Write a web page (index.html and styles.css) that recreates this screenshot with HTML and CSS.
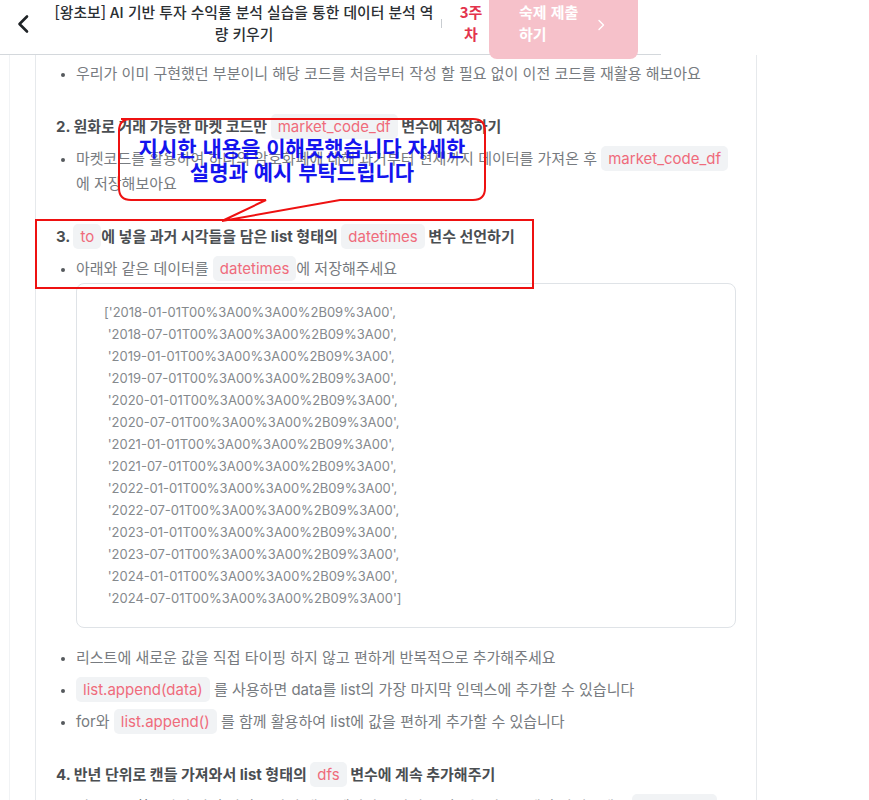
FILE: index.html
```html
<!DOCTYPE html>
<html lang="ko">
<head>
<meta charset="utf-8">
<title>3주차 숙제</title>
<link rel="stylesheet" href="styles.css">
</head>
<body>
<header class="topbar">
  <button class="back" aria-label="뒤로">
    <svg width="16" height="20" viewBox="0 0 16 20"><path d="M12 2.5 L4.5 10 L12 17.5" fill="none" stroke="#1f2326" stroke-width="2.6" stroke-linecap="round" stroke-linejoin="round"/></svg>
  </button>
  <h1 class="title">[왕초보] AI 기반 투자 수익률 분석 실습을 통한 데이터 분석 역<br>량 키우기</h1>
  <span class="divider"></span>
  <span class="week">3주 차</span>
  <a class="submit">
    <span class="submit-text">숙제 제출 하기</span>
    <svg class="submit-arrow" width="8" height="12" viewBox="0 0 8 12"><path d="M2 1.5 L6.5 6 L2 10.5" fill="none" stroke="#fff" stroke-width="1.4" stroke-linecap="round" stroke-linejoin="round"/></svg>
  </a>
</header>

<div class="layout">
  <main class="card">
    <ul class="list first">
      <li>우리가 이미 구현했던 부분이니 해당 코드를 처음부터 작성 할 필요 없이 이전 코드를 재활용 해보아요</li>
    </ul>

    <h2 class="step">2. 원화로 거래 가능한 마켓 코드만 <code class="chip">market_code_df</code> 변수에 저장하기</h2>
    <ul class="list">
      <li>마켓코드를 활용하여 하나의 암호화폐에 대해 과거부터 현재까지 데이터를 가져온 후 <code class="chip">market_code_df</code><br>에 저장해보아요</li>
    </ul>

    <h2 class="step">3. <code class="chip">to</code>에 넣을 과거 시각들을 담은 list 형태의 <code class="chip">datetimes</code> 변수 선언하기</h2>
    <ul class="list">
      <li>아래와 같은 데이터를 <code class="chip">datetimes</code>에 저장해주세요
<pre class="codebox">['2018-01-01T00%3A00%3A00%2B09%3A00',
 '2018-07-01T00%3A00%3A00%2B09%3A00',
 '2019-01-01T00%3A00%3A00%2B09%3A00',
 '2019-07-01T00%3A00%3A00%2B09%3A00',
 '2020-01-01T00%3A00%3A00%2B09%3A00',
 '2020-07-01T00%3A00%3A00%2B09%3A00',
 '2021-01-01T00%3A00%3A00%2B09%3A00',
 '2021-07-01T00%3A00%3A00%2B09%3A00',
 '2022-01-01T00%3A00%3A00%2B09%3A00',
 '2022-07-01T00%3A00%3A00%2B09%3A00',
 '2023-01-01T00%3A00%3A00%2B09%3A00',
 '2023-07-01T00%3A00%3A00%2B09%3A00',
 '2024-01-01T00%3A00%3A00%2B09%3A00',
 '2024-07-01T00%3A00%3A00%2B09%3A00']</pre>
      </li>
      <li>리스트에 새로운 값을 직접 타이핑 하지 않고 편하게 반복적으로 추가해주세요</li>
      <li><code class="chip">list.append(data)</code> 를 사용하면 data를 list의 가장 마지막 인덱스에 추가할 수 있습니다</li>
      <li>for와 <code class="chip">list.append()</code> 를 함께 활용하여 list에 값을 편하게 추가할 수 있습니다</li>
    </ul>

    <h2 class="step">4. 반년 단위로 캔들 가져와서 list 형태의 <code class="chip">dfs</code> 변수에 계속 추가해주기</h2>
    <ul class="list">
      <li>반복문을 활용하여 반년 단위로 과거 캔들 데이터를 가져온 뒤 dfs 리스트에 추가해주세요 <code class="chip">pd.concat</code></li>
    </ul>
  </main>
</div>

<div class="note-bubble">
  <svg class="bubble-shape" width="380" height="110" viewBox="0 0 380 110">
    <path d="M13 2 H365 Q377 2 377 14 V71 Q377 83 365 83 H232 L114 104 L158 83 H23 Q11 83 11 71 V14 Q11 2 23 2 Z" fill="none" stroke="#ee1111" stroke-width="2"/>
  </svg>
  <p class="bubble-text">지시한 내용을 이해못했습니다 자세한<br>설명과 예시 부탁드립니다</p>
</div>
<div class="note-box"></div>
</body>
</html>
```

FILE: styles.css
```css
html, body {
  margin: 0;
  padding: 0;
  height: 800px;
  overflow: hidden;
  background: #ffffff;
}

body {
  position: relative;
  font-family: Inter, "Noto Sans CJK KR", sans-serif;
  color: #6f7378;
}

/* ---------- top bar ---------- */
.topbar {
  position: relative;
  z-index: 2;
  display: flex;
  align-items: flex-start;
  width: 661px;
  height: 54px;
  border-bottom: 1px solid #d4d8dc;
  background: #fff;
}

.back {
  display: flex;
  align-items: center;
  justify-content: center;
  width: 16px;
  height: 20px;
  margin: 14px 0 0 15px;
  padding: 0;
  border: 0;
  background: none;
}

.title {
  width: 394px;
  margin: 1px 0 0 16px;
  font-family: "Noto Sans CJK KR", sans-serif;
  font-size: 14.8px;
  font-weight: 500;
  line-height: 22px;
  color: #2b2f33;
  text-align: center;
}

.divider {
  width: 1px;
  height: 9px;
  margin: 19px 0 0 0;
  background: #c9cdd1;
}

.week {
  width: 26px;
  margin: 1px 0 0 16px;
  font-family: "Noto Sans CJK KR", sans-serif;
  font-size: 15px;
  font-weight: 700;
  line-height: 22px;
  color: #e3344d;
  text-align: center;
}

.submit {
  display: flex;
  align-items: flex-start;
  justify-content: space-between;
  box-sizing: border-box;
  width: 149px;
  height: 59px;
  margin-left: 5px;
  padding: 1px 33px 0 30px;
  border-radius: 0 0 8px 8px;
  background: #f6c1ca;
}

.submit-text {
  width: 64px;
  font-family: "Noto Sans CJK KR", sans-serif;
  font-size: 15px;
  font-weight: 700;
  line-height: 22px;
  color: #ffffff;
}

.submit-arrow {
  margin-top: 18px;
}

/* ---------- content ---------- */
.layout {
  margin-left: 9px;
  padding-left: 25px;
  border-left: 1px solid #f1f3f5;
  height: 745px;
}

.card {
  box-sizing: border-box;
  width: 722px;
  height: 100%;
  padding: 6px 20px 0 20px;
  border-left: 1px solid #e6e9ec;
  border-right: 1px solid #e6e9ec;
}

.list {
  margin: 7px 0 0 0;
  padding: 0 0 0 20px;
  font-size: 15px;
  line-height: 25px;
  color: #777b80;
}

.list.first {
  margin-top: 0;
}

.list li {
  margin: 0;
}

.list li + li {
  margin-top: 7px;
}

.list li::marker {
  color: #55595d;
  font-size: 12px;
}

.step {
  margin: 28px 0 0 0;
  font-size: 15px;
  font-weight: 700;
  line-height: 25px;
  color: #4a4e52;
}

.chip {
  padding: 3px 7px;
  border-radius: 5px;
  background: #f1f3f5;
  font-family: Inter, "Noto Sans CJK KR", sans-serif;
  font-size: 15px;
  font-weight: 400;
  color: #ef6b7b;
}

.codebox {
  box-sizing: border-box;
  height: 345px;
  margin: 2px 0 17px 0;
  padding: 17px 26px 0 27px;
  border: 1px solid #dfe3e7;
  border-radius: 8px;
  font-family: Inter, "Noto Sans CJK KR", sans-serif;
  font-size: 13px;
  line-height: 22px;
  color: #85898d;
  white-space: pre;
}

/* ---------- annotation overlays ---------- */
.note-bubble {
  position: absolute;
  left: 108px;
  top: 117px;
  width: 380px;
  height: 110px;
  z-index: 5;
}

.bubble-shape {
  position: absolute;
  left: 0;
  top: 0;
}

.bubble-text {
  position: absolute;
  left: 11px;
  top: 18px;
  width: 366px;
  margin: 0;
  font-family: "Noto Sans CJK KR", sans-serif;
  font-size: 21px;
  font-weight: 700;
  line-height: 24px;
  color: #1414ee;
  text-align: center;
}

.note-box {
  position: absolute;
  left: 35px;
  top: 219px;
  width: 495px;
  height: 66px;
  border: 2px solid #ee1111;
  z-index: 5;
}
```
